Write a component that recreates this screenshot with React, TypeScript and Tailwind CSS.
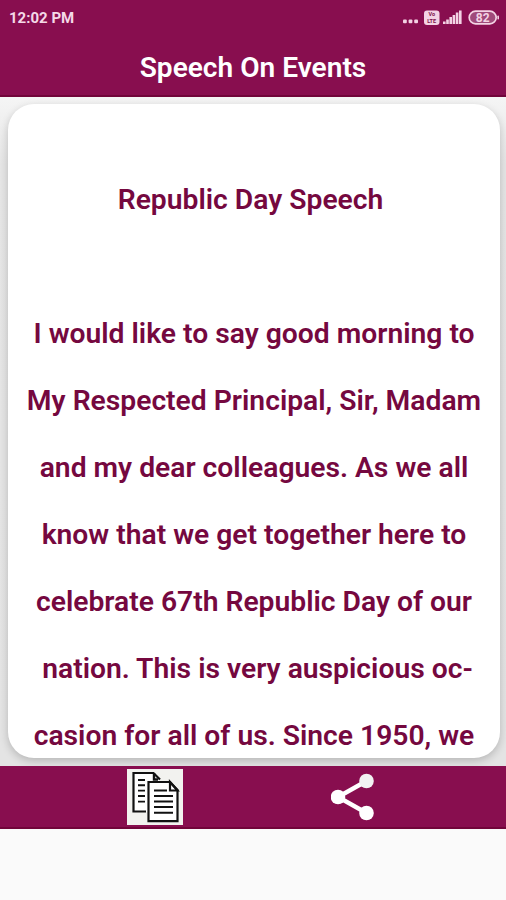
const lines = [
  "I would like to say good morning to",
  "My Respected Principal, Sir, Madam",
  "and my dear colleagues. As we all",
  "know that we get together here to",
  "celebrate 67th Republic Day of our",
  "\u00a0nation. This is very auspicious oc-",
  "casion for all of us. Since 1950, we",
];

const StatusIcons = () => {
  return (
    <svg width="100" height="20" viewBox="0 0 100 20" fill="#f3d3e4">
      <rect x="3" y="10.5" width="3.8" height="3.8" rx="1" />
      <rect x="8.6" y="10.5" width="3.8" height="3.8" rx="1" />
      <rect x="14.2" y="10.5" width="3.8" height="3.8" rx="1" />
      <rect x="24" y="1.5" width="15.5" height="14.5" rx="3" />
      <g
        fill="#7d1049"
        fontFamily="Roboto, sans-serif"
        fontSize="5.5"
        fontWeight="700"
        textAnchor="middle"
      >
        <text x="31.7" y="7.4">Vo</text>
        <text x="31.7" y="14.2">LTE</text>
      </g>
      <rect x="43" y="12.5" width="2.6" height="2.5" />
      <rect x="46.2" y="10.5" width="2.6" height="4.5" />
      <rect x="49.4" y="8" width="2.6" height="7" />
      <rect x="52.6" y="6" width="2.6" height="9" />
      <rect x="55.8" y="3.5" width="2.6" height="11.5" />
      <rect x="59" y="1.5" width="2.6" height="13.5" />
      <rect
        x="69.2"
        y="2.2"
        width="27"
        height="12.6"
        rx="6.3"
        fill="#a04a7a"
        stroke="#f3d3e4"
        strokeWidth="1.7"
      />
      <rect x="97.4" y="6.5" width="1.6" height="4" rx="0.8" />
      <text
        x="82.7"
        y="12.7"
        textAnchor="middle"
        fontFamily="Roboto, sans-serif"
        fontSize="12"
        fontWeight="700"
      >
        82
      </text>
    </svg>
  );
};

const CopyIcon = () => {
  return (
    <svg width="56" height="56" viewBox="0 0 56 56" fill="none" stroke="#111">
      <rect width="56" height="56" fill="#f2f2ef" stroke="none" />
      <path
        d="M18 43H6.5V4H26L33 11.5V14H21V43Z"
        fill="#fff"
        stroke="none"
      />
      <path d="M19 42.5H6.5V4H26.5L33 10.5" strokeWidth="2.2" />
      <path d="M27 4V10.5H31" strokeWidth="2.4" />
      <path
        d="M11 11H18M11 16.3H18M11 21.6H18M11 27H18M11 32.6H18"
        strokeWidth="1.9"
      />
      <path
        d="M21.5 13H43L50.5 21V52.2H21.5Z"
        fill="#fff"
        strokeWidth="2.2"
      />
      <path d="M43 13V21.5H50.5Z" strokeWidth="2.2" />
      <path
        d="M27 21.5H40M27 27H46M27 32.5H46M27 38H46M27 43.8H46"
        strokeWidth="2"
      />
    </svg>
  );
};

const ShareIcon = () => {
  return (
    <svg width="44" height="48" viewBox="0 0 44 48">
      <path
        d="M35.5 8L7 24L35.5 40"
        fill="none"
        stroke="#fff"
        strokeWidth="4.4"
      />
      <circle cx="35.5" cy="8" r="7.3" fill="#f2f2f2" />
      <circle cx="7" cy="24" r="7.3" fill="#fff" />
      <circle cx="35.5" cy="40" r="7.3" fill="#fff" />
    </svg>
  );
};

const App = () => {
  return (
    <div className="flex h-[900px] w-[506px] flex-col overflow-hidden bg-[#fafafa] font-[Roboto,sans-serif]">
      <header className="h-[97px] shrink-0 border-b-2 border-[#71053a] bg-[#880e4f]">
        <div className="flex h-9 items-center justify-between pl-[9px] pr-[6px] pt-px">
          <span className="text-[15px] font-bold text-[#f5d9e8]">12:02 PM</span>
          <StatusIcons />
        </div>
        <h1 className="text-center text-[28.1px] font-semibold leading-[64px] text-white">
          Speech On Events
        </h1>
      </header>

      <main className="h-[669px] shrink-0 bg-linear-to-b from-[#f5f5f5] via-[#e6e6e6] via-10% to-[#e4e4e4] pb-2 pl-2 pr-[6px] pt-[7px]">
        <div className="h-full overflow-hidden rounded-[26px] bg-white pt-[62px] text-center text-[28.25px] font-semibold leading-[67px] text-[#75083f] shadow-[0_3px_8px_rgba(0,0,0,0.2)]">
          <h2 className="mb-[67px] pr-[7px]">Republic Day Speech</h2>
          {lines.map((line) => (
            <p key={line} className="whitespace-nowrap">
              {line}
            </p>
          ))}
        </div>
      </main>

      <footer className="flex h-[63px] shrink-0 items-center border-b-2 border-[#71053a] bg-[#880e4f] pl-[127px]">
        <button className="mr-[148px]">
          <CopyIcon />
        </button>
        <button>
          <ShareIcon />
        </button>
      </footer>
    </div>
  );
};

export default App;
